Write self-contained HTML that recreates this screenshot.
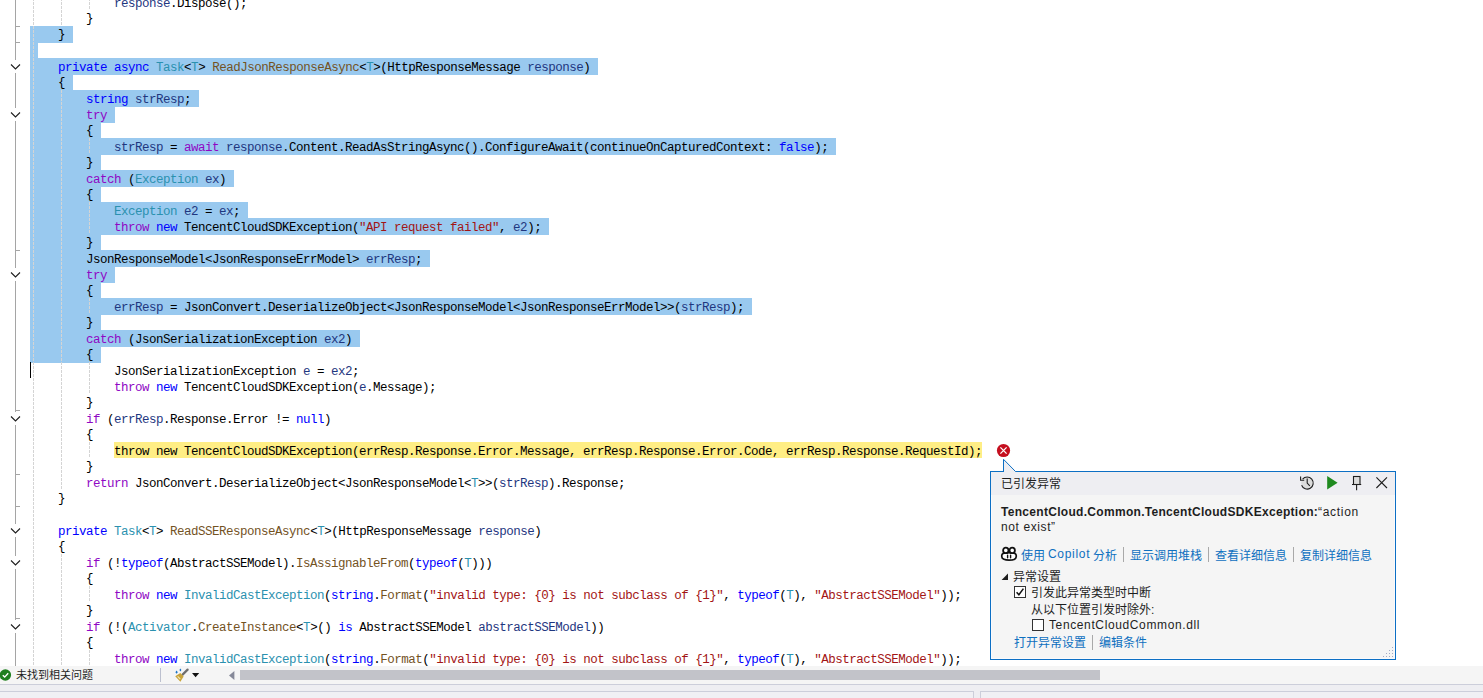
<!DOCTYPE html>
<html lang="zh-CN">
<head>
<meta charset="utf-8">
<title>TencentCloudSDKException</title>
<style>
html,body{margin:0;padding:0;}
body{width:1483px;height:698px;overflow:hidden;background:#fff;position:relative;font-family:"Liberation Sans",sans-serif;}
#ed{position:absolute;left:0;top:0;width:1483px;height:666px;overflow:hidden;background:#fff;}
.ln{position:absolute;left:30px;margin-top:2px;height:16px;line-height:16px;white-space:pre;font-family:"Liberation Mono",monospace;font-size:12.5px;letter-spacing:-0.5012px;color:#000;}
.br{margin-top:1px}
.k{color:#0000ff}.c{color:#8f08c4}.t{color:#2b91af}.m{color:#74531f}.v{color:#1f377f}.s{color:#a31515}
.sel{position:absolute;left:30px;height:17px;background:#99c9ef;}
.cur{position:absolute;height:16px;background:#ffee85;}
.gd{position:absolute;width:1px;background:repeating-linear-gradient(to bottom,#d4d4d4 0,#d4d4d4 3px,transparent 3px,transparent 4px);}
.ol{position:absolute;left:15px;width:1px;background:#a5a5a5;}
.tk{position:absolute;left:15px;width:5px;height:1px;background:#a5a5a5;}
.cv{position:absolute;left:10px;}
#caret{position:absolute;left:30px;top:362px;width:1px;height:16px;background:#000;}
/* status row */
#st{position:absolute;left:0;top:666px;width:1483px;height:18px;background:#f5f5f5;}
#st .txt{position:absolute;left:16px;top:2px;width:78px;height:14px;line-height:14px;font-size:11px;color:#1e1e1e;white-space:nowrap;overflow:hidden;}
#st .sep{position:absolute;left:160px;top:2px;width:1px;height:14px;background:#bcc0cf;}
#thumb{position:absolute;left:240px;top:4px;width:860px;height:10px;background:#c2c3c9;}
#ln684{position:absolute;left:0;top:684px;width:1483px;height:1px;background:#ccceda;}
#band{position:absolute;left:0;top:685px;width:1483px;height:13px;background:#eeeef2;}
.pnl{position:absolute;top:691px;height:10px;border:1px solid #ccceda;background:#f0f0f4;box-sizing:border-box;}
/* popup */
#pop{position:absolute;left:990px;top:471px;width:406px;height:189px;box-sizing:border-box;border:1px solid #0c6fc4;background:#f5f5f5;box-shadow:inset 0 0 0 1px #fafafc;font-size:12px;color:#1e1e1e;}
#pop .hd{position:absolute;left:0;top:0;width:404px;height:23px;background:#eeeef2;}
#pc{position:absolute;left:0;top:0;width:0;height:0;font-size:12px;color:#1e1e1e;}
.cj{height:16px;line-height:16px;overflow:hidden;}
.lat{height:15px;line-height:15px;}
.abs{position:absolute;white-space:nowrap;}
.lk{color:#0e70c0;}
.vs{position:absolute;width:1px;background:#a9a9a9;}
.cb{position:absolute;width:12px;height:12px;box-sizing:border-box;border:1px solid #333;background:#fff;}
</style>
</head>
<body>
<div id="ed">
<div class="sel" style="top:26px;width:43px"></div>
<div class="sel" style="top:42px;width:8px"></div>
<div class="sel" style="top:58px;width:568px"></div>
<div class="sel" style="top:74px;width:43px"></div>
<div class="sel" style="top:90px;width:169px"></div>
<div class="sel" style="top:106px;width:85px"></div>
<div class="sel" style="top:122px;width:71px"></div>
<div class="sel" style="top:138px;width:806px"></div>
<div class="sel" style="top:154px;width:71px"></div>
<div class="sel" style="top:170px;width:204px"></div>
<div class="sel" style="top:186px;width:71px"></div>
<div class="sel" style="top:202px;width:218px"></div>
<div class="sel" style="top:218px;width:519px"></div>
<div class="sel" style="top:234px;width:71px"></div>
<div class="sel" style="top:250px;width:400px"></div>
<div class="sel" style="top:266px;width:85px"></div>
<div class="sel" style="top:282px;width:71px"></div>
<div class="sel" style="top:298px;width:722px"></div>
<div class="sel" style="top:314px;width:71px"></div>
<div class="sel" style="top:330px;width:330px"></div>
<div class="sel" style="top:346px;width:71px"></div>
<div class="cur" style="top:442px;left:114px;width:868px"></div>
<div class="gd" style="left:33px;top:-6px;height:672px"></div>
<div class="gd" style="left:61px;top:-6px;height:32px"></div>
<div class="gd" style="left:61px;top:90px;height:400px"></div>
<div class="gd" style="left:61px;top:554px;height:112px"></div>
<div class="gd" style="left:89px;top:-6px;height:16px"></div>
<div class="gd" style="left:89px;top:138px;height:16px"></div>
<div class="gd" style="left:89px;top:202px;height:32px"></div>
<div class="gd" style="left:89px;top:298px;height:16px"></div>
<div class="gd" style="left:89px;top:362px;height:32px"></div>
<div class="gd" style="left:89px;top:442px;height:16px"></div>
<div class="gd" style="left:89px;top:586px;height:16px"></div>
<div class="gd" style="left:89px;top:650px;height:16px"></div>
<div class="ln" style="top:-6px">            <span class="v">response</span>.Dispose();</div>
<div class="ln br" style="top:10px">        }</div>
<div class="ln br" style="top:26px">    }</div>
<div class="ln" style="top:58px">    <span class="k">private</span> <span class="k">async</span> <span class="t">Task</span>&lt;<span class="t">T</span>&gt; <span class="m">ReadJsonResponseAsync</span>&lt;<span class="t">T</span>&gt;(HttpResponseMessage <span class="v">response</span>)</div>
<div class="ln br" style="top:74px">    {</div>
<div class="ln" style="top:90px">        <span class="k">string</span> <span class="v">strResp</span>;</div>
<div class="ln" style="top:106px">        <span class="c">try</span></div>
<div class="ln br" style="top:122px">        {</div>
<div class="ln" style="top:138px">            <span class="v">strResp</span> = <span class="c">await</span> <span class="v">response</span>.Content.ReadAsStringAsync().ConfigureAwait(continueOnCapturedContext: <span class="k">false</span>);</div>
<div class="ln br" style="top:154px">        }</div>
<div class="ln" style="top:170px">        <span class="c">catch</span> (<span class="t">Exception</span> <span class="v">ex</span>)</div>
<div class="ln br" style="top:186px">        {</div>
<div class="ln" style="top:202px">            <span class="t">Exception</span> <span class="v">e2</span> = <span class="v">ex</span>;</div>
<div class="ln" style="top:218px">            <span class="c">throw</span> <span class="k">new</span> TencentCloudSDKException(<span class="s">"API request failed"</span>, <span class="v">e2</span>);</div>
<div class="ln br" style="top:234px">        }</div>
<div class="ln" style="top:250px">        JsonResponseModel&lt;JsonResponseErrModel&gt; <span class="v">errResp</span>;</div>
<div class="ln" style="top:266px">        <span class="c">try</span></div>
<div class="ln br" style="top:282px">        {</div>
<div class="ln" style="top:298px">            <span class="v">errResp</span> = JsonConvert.DeserializeObject&lt;JsonResponseModel&lt;JsonResponseErrModel&gt;&gt;(<span class="v">strResp</span>);</div>
<div class="ln br" style="top:314px">        }</div>
<div class="ln" style="top:330px">        <span class="c">catch</span> (JsonSerializationException <span class="v">ex2</span>)</div>
<div class="ln br" style="top:346px">        {</div>
<div class="ln" style="top:362px">            JsonSerializationException <span class="v">e</span> = <span class="v">ex2</span>;</div>
<div class="ln" style="top:378px">            <span class="c">throw</span> <span class="k">new</span> TencentCloudSDKException(<span class="v">e</span>.Message);</div>
<div class="ln br" style="top:394px">        }</div>
<div class="ln" style="top:410px">        <span class="c">if</span> (<span class="v">errResp</span>.Response.Error != <span class="k">null</span>)</div>
<div class="ln br" style="top:426px">        {</div>
<div class="ln" style="top:442px">            throw new TencentCloudSDKException(errResp.Response.Error.Message, errResp.Response.Error.Code, errResp.Response.RequestId);</div>
<div class="ln br" style="top:458px">        }</div>
<div class="ln" style="top:474px">        <span class="c">return</span> JsonConvert.DeserializeObject&lt;JsonResponseModel&lt;<span class="t">T</span>&gt;&gt;(<span class="v">strResp</span>).Response;</div>
<div class="ln br" style="top:490px">    }</div>
<div class="ln" style="top:522px">    <span class="k">private</span> <span class="t">Task</span>&lt;<span class="t">T</span>&gt; <span class="m">ReadSSEResponseAsync</span>&lt;<span class="t">T</span>&gt;(HttpResponseMessage <span class="v">response</span>)</div>
<div class="ln br" style="top:538px">    {</div>
<div class="ln" style="top:554px">        <span class="c">if</span> (!<span class="k">typeof</span>(AbstractSSEModel).<span class="m">IsAssignableFrom</span>(<span class="k">typeof</span>(<span class="t">T</span>)))</div>
<div class="ln br" style="top:570px">        {</div>
<div class="ln" style="top:586px">            <span class="c">throw</span> <span class="k">new</span> <span class="t">InvalidCastException</span>(<span class="k">string</span>.<span class="m">Format</span>(<span class="s">"invalid type: {0} is not subclass of {1}"</span>, <span class="k">typeof</span>(<span class="t">T</span>), <span class="s">"AbstractSSEModel"</span>));</div>
<div class="ln br" style="top:602px">        }</div>
<div class="ln" style="top:618px">        <span class="c">if</span> (!(<span class="t">Activator</span>.<span class="m">CreateInstance</span>&lt;<span class="t">T</span>&gt;() <span class="k">is</span> AbstractSSEModel <span class="v">abstractSSEModel</span>))</div>
<div class="ln br" style="top:634px">        {</div>
<div class="ln" style="top:650px">            <span class="c">throw</span> <span class="k">new</span> <span class="t">InvalidCastException</span>(<span class="k">string</span>.<span class="m">Format</span>(<span class="s">"invalid type: {0} is not subclass of {1}"</span>, <span class="k">typeof</span>(<span class="t">T</span>), <span class="s">"AbstractSSEModel"</span>));</div>
<div id="caret"></div>
<div class="ol" style="top:0px;height:60px"></div>
<div class="ol" style="top:73px;height:35px"></div>
<div class="ol" style="top:121px;height:147px"></div>
<div class="ol" style="top:281px;height:131px"></div>
<div class="ol" style="top:425px;height:99px"></div>
<div class="ol" style="top:537px;height:19px"></div>
<div class="ol" style="top:569px;height:51px"></div>
<div class="ol" style="top:633px;height:33px"></div>
<div class="tk" style="top:26px"></div>
<div class="tk" style="top:42px"></div>
<div class="tk" style="top:250px"></div>
<div class="tk" style="top:410px"></div>
<div class="tk" style="top:474px"></div>
<div class="tk" style="top:506px"></div>
<div class="tk" style="top:618px"></div>
<svg class="cv" style="top:63px" width="12" height="8" viewBox="0 0 12 8"><path d="M1 1.5 L5.5 6 L10 1.5" fill="none" stroke="#1e1e1e" stroke-width="1.1"/></svg>
<svg class="cv" style="top:111px" width="12" height="8" viewBox="0 0 12 8"><path d="M1 1.5 L5.5 6 L10 1.5" fill="none" stroke="#1e1e1e" stroke-width="1.1"/></svg>
<svg class="cv" style="top:271px" width="12" height="8" viewBox="0 0 12 8"><path d="M1 1.5 L5.5 6 L10 1.5" fill="none" stroke="#1e1e1e" stroke-width="1.1"/></svg>
<svg class="cv" style="top:415px" width="12" height="8" viewBox="0 0 12 8"><path d="M1 1.5 L5.5 6 L10 1.5" fill="none" stroke="#1e1e1e" stroke-width="1.1"/></svg>
<svg class="cv" style="top:527px" width="12" height="8" viewBox="0 0 12 8"><path d="M1 1.5 L5.5 6 L10 1.5" fill="none" stroke="#1e1e1e" stroke-width="1.1"/></svg>
<svg class="cv" style="top:559px" width="12" height="8" viewBox="0 0 12 8"><path d="M1 1.5 L5.5 6 L10 1.5" fill="none" stroke="#1e1e1e" stroke-width="1.1"/></svg>
<svg class="cv" style="top:623px" width="12" height="8" viewBox="0 0 12 8"><path d="M1 1.5 L5.5 6 L10 1.5" fill="none" stroke="#1e1e1e" stroke-width="1.1"/></svg>
<!-- error glyph -->
<svg class="abs" style="left:996px;top:443px" width="15" height="15" viewBox="0 0 15 15"><circle cx="7.5" cy="7.5" r="6.6" fill="#c50f1f"/><path d="M4.4 4.4 L10.6 10.6 M10.6 4.4 L4.4 10.6" stroke="#fff" stroke-width="1.3" fill="none"/></svg>
</div>

<!-- popup -->
<div id="pop">
  <div class="hd"></div>
</div>
<svg class="abs" style="left:1000px;top:457px" width="20" height="16" viewBox="0 0 20 16"><path d="M4 15.2 L4 3.2 L15.2 14.2 L15.2 15.2 Z" fill="#eeeef2"/><path d="M3.5 15 L3.5 2.3 L15 14" fill="none" stroke="#0c6fc4" stroke-width="1"/></svg>
<div id="pc">
  <div class="abs cj" style="left:1001px;top:476px;width:60px">已引发异常</div>
  <!-- header icons -->
  <svg class="abs" style="left:1298px;top:474px" width="18" height="18" viewBox="0 0 18 18"><circle cx="9.2" cy="9" r="6" fill="#dcdcdc"/><path d="M4.6 5.2 A6 6 0 1 1 3.6 11.2" fill="none" stroke="#1e1e1e" stroke-width="1.1"/><path d="M2.6 2.6 L2.6 6.2 L6.2 6.2" fill="none" stroke="#1e1e1e" stroke-width="1.1"/><path d="M9.2 4.6 L9.2 9 L11.8 11.8" fill="none" stroke="#1e1e1e" stroke-width="1.1"/></svg>
  <svg class="abs" style="left:1326px;top:475px" width="14" height="16" viewBox="0 0 14 16"><path d="M1.2 1 L1.2 14.6 L11.6 7.8 Z" fill="#1f8a1f"/></svg>
  <svg class="abs" style="left:1349px;top:474px" width="16" height="18" viewBox="0 0 16 18"><rect x="4.5" y="2.5" width="6.5" height="8" fill="#dcdcdc" stroke="#1e1e1e" stroke-width="1.1"/><path d="M3 10.5 L12.2 10.5 M7.6 11 L7.6 16.2" stroke="#1e1e1e" stroke-width="1.1" fill="none"/></svg>
  <svg class="abs" style="left:1374px;top:475px" width="16" height="16" viewBox="0 0 16 16"><path d="M2.4 2.4 L13 13 M13 2.4 L2.4 13" stroke="#1e1e1e" stroke-width="1.1" fill="none"/></svg>
  <!-- message -->
  <div class="abs lat" style="left:1001px;top:505px;font-weight:bold;letter-spacing:0.3px">TencentCloud.Common.TencentCloudSDKException:</div>
  <div class="abs lat" style="left:1318px;top:505px;letter-spacing:0.7px">&ldquo;action</div>
  <div class="abs lat" style="left:1001px;top:520px;letter-spacing:0.6px">not exist&rdquo;</div>
  <!-- links row 1 -->
  <svg class="abs" style="left:1000px;top:546px" width="18" height="16" viewBox="0 0 18 16"><path d="M1.8 9.2 C1.8 7.2 4 6.6 9 6.6 C14 6.6 16.2 7.2 16.2 9.2 L16.2 10.8 C16.2 13 13 14.2 9 14.2 C5 14.2 1.8 13 1.8 10.8 Z" fill="#fff" stroke="#111" stroke-width="1.7"/><circle cx="5.8" cy="4.4" r="2.7" fill="#fff" stroke="#111" stroke-width="1.8"/><circle cx="12.2" cy="4.4" r="2.7" fill="#fff" stroke="#111" stroke-width="1.8"/><path d="M7.6 9.2 L7.6 11.8 M10.6 9.2 L10.6 11.8" stroke="#111" stroke-width="1.4" stroke-linecap="round" fill="none"/></svg>
  <div class="abs cj lk" style="left:1021px;top:548px;width:25px">使用</div>
  <div class="abs lat lk" style="left:1048px;top:547px;letter-spacing:0.7px">Copilot</div>
  <div class="abs cj lk" style="left:1093px;top:548px;width:25px">分析</div>
  <div class="vs" style="left:1123px;top:547px;height:15px"></div>
  <div class="abs cj lk" style="left:1130px;top:548px;width:73px">显示调用堆栈</div>
  <div class="vs" style="left:1208px;top:547px;height:15px"></div>
  <div class="abs cj lk" style="left:1215px;top:548px;width:73px">查看详细信息</div>
  <div class="vs" style="left:1293px;top:547px;height:15px"></div>
  <div class="abs cj lk" style="left:1300px;top:548px;width:73px">复制详细信息</div>
  <!-- exception settings -->
  <svg class="abs" style="left:1001px;top:572px" width="8" height="9" viewBox="0 0 8 9"><path d="M0.6 8 L7 8 L7 1.4 Z" fill="#1e1e1e"/></svg>
  <div class="abs cj" style="left:1013px;top:569px;width:49px">异常设置</div>
  <div class="cb" style="left:1014px;top:586px"><svg width="10" height="10" viewBox="0 0 10 10" style="display:block"><path d="M1.6 5.2 L3.9 7.8 L8.4 1.6" stroke="#111" stroke-width="1.5" fill="none"/></svg></div>
  <div class="abs cj" style="left:1031px;top:585px;width:121px">引发此异常类型时中断</div>
  <div class="abs cj" style="left:1031px;top:602px;width:125px">从以下位置引发时除外:</div>
  <div class="cb" style="left:1032px;top:619px"></div>
  <div class="abs lat" style="left:1049px;top:618px;letter-spacing:0.62px">TencentCloudCommon.dll</div>
  <div class="abs cj lk" style="left:1014px;top:635px;width:73px">打开异常设置</div>
  <div class="vs" style="left:1092px;top:635px;height:15px"></div>
  <div class="abs cj lk" style="left:1099px;top:635px;width:49px">编辑条件</div>
  <!-- grip -->
  <svg class="abs" style="left:1382px;top:646px" width="12" height="12" viewBox="0 0 12 12" shape-rendering="crispEdges"><g fill="#a3aac4"><rect x="10" y="1" width="1" height="1"/><rect x="7" y="4" width="1" height="1"/><rect x="10" y="4" width="1" height="1"/><rect x="4" y="7" width="1" height="1"/><rect x="7" y="7" width="1" height="1"/><rect x="10" y="7" width="1" height="1"/><rect x="1" y="10" width="1" height="1"/><rect x="4" y="10" width="1" height="1"/><rect x="7" y="10" width="1" height="1"/><rect x="10" y="10" width="1" height="1"/></g></svg>
</div>

<div id="st">
  <svg class="abs" style="left:0;top:3px" width="12" height="12" viewBox="0 0 12 12"><circle cx="5.4" cy="6" r="5.7" fill="#1f7f1f"/><path d="M2.8 6.2 L4.7 8.1 L8.2 4.2" stroke="#fff" stroke-width="1.4" fill="none"/></svg>
  <div class="txt">未找到相关问题</div>
  <div class="sep"></div>
  <svg class="abs" style="left:173px;top:2px" width="18" height="16" viewBox="0 0 18 16"><path d="M14.6 1.6 L9.6 6.6" stroke="#6e6e6e" stroke-width="2.2" stroke-linecap="round" fill="none"/><path d="M7.4 5 L10.6 8.4 L7.4 13.8 L2.2 8.2 Z" fill="#c9a43a"/><path d="M4.6 8.4 L7.2 11" stroke="#f1e3b4" stroke-width="1.2" fill="none"/><path d="M3.6 2.6 L4.8 4.2 L3.6 5.8 L2.4 4.2 Z M7.4 0.6 L8.4 2 L7.4 3.4 L6.4 2 Z" fill="#1b75c9"/></svg>
  <svg class="abs" style="left:191px;top:6px" width="10" height="6" viewBox="0 0 10 6"><path d="M1 1 L8.2 1 L4.6 5.2 Z" fill="#111"/></svg>
  <svg class="abs" style="left:228px;top:4px" width="8" height="11" viewBox="0 0 8 11"><path d="M6.4 1 L6.4 10 L1 5.5 Z" fill="#868999"/></svg>
  <div id="thumb"></div>
</div>
<div id="ln684"></div>
<div id="band"></div>
<div class="pnl" style="left:-1px;width:975px"></div>
<div class="pnl" style="left:980px;width:510px"></div>
</body>
</html>
